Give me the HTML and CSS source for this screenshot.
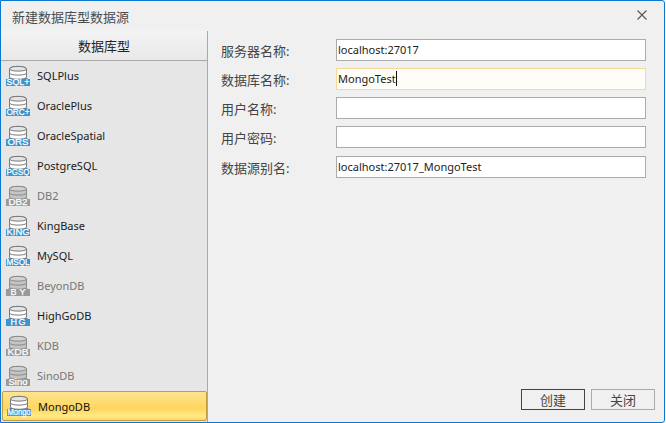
FILE: index.html
```html
<!DOCTYPE html>
<html>
  <head>
    <meta charset="utf-8">
    <title>新建数据库型数据源</title>
    <link rel="stylesheet" href="styles.css">
  </head>
  <body>
    <svg class="icon_defs" width="0" height="0">
      <symbol id="db_can" viewBox="0 0 24 15">
        <path class="can_body" d="M3.500 4C3.500 .5 20.500 .5 20.500 4V12C20.500 15 3.500 15 3.500 12Z"/>
        <path class="can_top" d="M3.500 4C3.500 6.800 20.500 6.800 20.500 4C20.500 .5 3.500 .5 3.500 4Z"/>
        <path class="can_line" d="M3.500 8C3.500 10.800 20.500 10.800 20.500 8"/>
      </symbol>
      <symbol id="db_badge" viewBox="0 0 24 8">
        <path d="M0 3L3 0H21L24 3V8H0Z"/>
      </symbol>
    </svg>

    <div class="dialog">
      <div class="titlebar">
        <span class="title">新建数据库型数据源</span>
        <svg class="close_icon" width="10" height="10" viewBox="0 0 10 10">
          <path d="M.5 .5L9.500 9.500M9.500 .5L.5 9.500" stroke="#555" stroke-width="1.100"/>
        </svg>
      </div>

      <div class="content">
        <div class="sidebar">
          <div class="sidebar_header">数据库型</div>
          <ul class="db_list">
            <li class="db_item">
              <svg class="db_icon" width="24" height="24" viewBox="0 0 24 24"><use href="#db_badge" y="14" width="24" height="8"/><use href="#db_can" y="1" width="24" height="15"/><rect class="badge_fill" y="15" width="24" height="7"/><text class="badge_text" x="12" y="21" textLength="23" lengthAdjust="spacingAndGlyphs">SQL+</text></svg>
              <span>SQLPlus</span>
            </li>
            <li class="db_item">
              <svg class="db_icon" width="24" height="24" viewBox="0 0 24 24"><use href="#db_badge" y="14" width="24" height="8"/><use href="#db_can" y="1" width="24" height="15"/><rect class="badge_fill" y="15" width="24" height="7"/><text class="badge_text" x="12" y="21" textLength="23" lengthAdjust="spacingAndGlyphs">ORC+</text></svg>
              <span>OraclePlus</span>
            </li>
            <li class="db_item">
              <svg class="db_icon" width="24" height="24" viewBox="0 0 24 24"><use href="#db_badge" y="14" width="24" height="8"/><use href="#db_can" y="1" width="24" height="15"/><rect class="badge_fill" y="15" width="24" height="7"/><text class="badge_text" x="12" y="21" textLength="21" lengthAdjust="spacingAndGlyphs">ORS</text></svg>
              <span>OracleSpatial</span>
            </li>
            <li class="db_item">
              <svg class="db_icon" width="24" height="24" viewBox="0 0 24 24"><use href="#db_badge" y="14" width="24" height="8"/><use href="#db_can" y="1" width="24" height="15"/><rect class="badge_fill" y="15" width="24" height="7"/><text class="badge_text" x="12" y="21" textLength="23" lengthAdjust="spacingAndGlyphs">PGSQ</text></svg>
              <span>PostgreSQL</span>
            </li>
            <li class="db_item db_item_off">
              <svg class="db_icon" width="24" height="24" viewBox="0 0 24 24"><use href="#db_badge" y="14" width="24" height="8"/><use href="#db_can" y="1" width="24" height="15"/><rect class="badge_fill" y="15" width="24" height="7"/><text class="badge_text" x="12" y="21" textLength="19" lengthAdjust="spacingAndGlyphs">DB2</text></svg>
              <span>DB2</span>
            </li>
            <li class="db_item">
              <svg class="db_icon" width="24" height="24" viewBox="0 0 24 24"><use href="#db_badge" y="14" width="24" height="8"/><use href="#db_can" y="1" width="24" height="15"/><rect class="badge_fill" y="15" width="24" height="7"/><text class="badge_text" x="12" y="21" textLength="23" lengthAdjust="spacingAndGlyphs">KING</text></svg>
              <span>KingBase</span>
            </li>
            <li class="db_item">
              <svg class="db_icon" width="24" height="24" viewBox="0 0 24 24"><use href="#db_badge" y="14" width="24" height="8"/><use href="#db_can" y="1" width="24" height="15"/><rect class="badge_fill" y="15" width="24" height="7"/><text class="badge_text" x="12" y="21" textLength="23" lengthAdjust="spacingAndGlyphs">MSQL</text></svg>
              <span>MySQL</span>
            </li>
            <li class="db_item db_item_off">
              <svg class="db_icon" width="24" height="24" viewBox="0 0 24 24"><use href="#db_badge" y="14" width="24" height="8"/><use href="#db_can" y="1" width="24" height="15"/><rect class="badge_fill" y="15" width="24" height="7"/><text class="badge_text" x="12" y="21" textLength="15" lengthAdjust="spacing">BY</text></svg>
              <span>BeyonDB</span>
            </li>
            <li class="db_item">
              <svg class="db_icon" width="24" height="24" viewBox="0 0 24 24"><use href="#db_badge" y="14" width="24" height="8"/><use href="#db_can" y="1" width="24" height="15"/><rect class="badge_fill" y="15" width="24" height="7"/><text class="badge_text" x="12" y="21" textLength="15" lengthAdjust="spacing">HG</text></svg>
              <span>HighGoDB</span>
            </li>
            <li class="db_item db_item_off">
              <svg class="db_icon" width="24" height="24" viewBox="0 0 24 24"><use href="#db_badge" y="14" width="24" height="8"/><use href="#db_can" y="1" width="24" height="15"/><rect class="badge_fill" y="15" width="24" height="7"/><text class="badge_text" x="12" y="21" textLength="21" lengthAdjust="spacingAndGlyphs">KDB</text></svg>
              <span>KDB</span>
            </li>
            <li class="db_item db_item_off">
              <svg class="db_icon" width="24" height="24" viewBox="0 0 24 24"><use href="#db_badge" y="14" width="24" height="8"/><use href="#db_can" y="1" width="24" height="15"/><rect class="badge_fill" y="15" width="24" height="7"/><text class="badge_text" x="12" y="21" textLength="19" lengthAdjust="spacingAndGlyphs">Sino</text></svg>
              <span>SinoDB</span>
            </li>
            <li class="db_item db_item_selected">
              <svg class="db_icon" width="24" height="24" viewBox="0 0 24 24"><use href="#db_badge" y="14" width="24" height="8"/><use href="#db_can" y="1" width="24" height="15"/><rect class="badge_fill" y="15" width="24" height="7"/><text class="badge_text" x="12" y="21" textLength="23" lengthAdjust="spacingAndGlyphs">Mongo</text></svg>
              <span>MongoDB</span>
            </li>
          </ul>
        </div>

        <div class="main">
          <form class="form_grid" onsubmit="return false">
            <label class="form_label" for="server_field">服务器名称:</label>
            <input id="server_field" class="form_input" type="text" value="localhost:27017">

            <label class="form_label" for="database_field">数据库名称:</label>
            <div class="form_input form_input_focus" id="database_field"><span>MongoTest</span><span class="caret"></span></div>

            <label class="form_label" for="user_field">用户名称:</label>
            <input id="user_field" class="form_input" type="text">

            <label class="form_label" for="password_field">用户密码:</label>
            <input id="password_field" class="form_input" type="text">

            <label class="form_label form_row_last" for="alias_field">数据源别名:</label>
            <input id="alias_field" class="form_input form_row_last" type="text" value="localhost:27017_MongoTest">
          </form>

          <div class="button_row">
            <button class="button button_default">创建</button>
            <button class="button">关闭</button>
          </div>
        </div>
      </div>
    </div>
  </body>
</html>
```

FILE: styles.css
```css
html, body
  {
  margin: 0;
  height: 100%;
  background: #fff;
  }

body
  {
  font-family: "Noto Sans", "Noto Sans CJK SC", sans-serif;
  font-size: 11px;
  color: #222;
  }

.icon_defs
  {
  display: block;
  }

.dialog
  {
  box-sizing: border-box;
  width: 665px;
  height: 423px;
  display: flex;
  flex-direction: column;
  background: #f0f0f0;
  border: 1px solid #0a78d0;
  border-radius: 0 3px 3px 0;
  }

.titlebar
  {
  height: 30px;
  flex: none;
  display: flex;
  align-items: center;
  justify-content: space-between;
  box-sizing: border-box;
  padding: 1px 17px 0 11px;
  }

.title
  {
  font-size: 13px;
  color: #4c4c4c;
  }

.close_icon
  {
  display: block;
  margin-bottom: 3px;
  }

.content
  {
  flex: 1;
  display: flex;
  min-height: 0;
  }

.sidebar
  {
  width: 206px;
  flex: none;
  display: flex;
  flex-direction: column;
  background: #e6e6e6;
  border-right: 1px solid #a9a9a9;
  }

.sidebar_header
  {
  box-sizing: border-box;
  height: 30px;
  flex: none;
  display: flex;
  align-items: center;
  justify-content: center;
  padding-bottom: 1px;
  font-size: 13px;
  color: #222;
  background: linear-gradient(#f3f3f3, #e9e9e9);
  border-bottom: 1px solid #a9a9a9;
  }

.db_list
  {
  list-style: none;
  margin: 0;
  padding: 0;
  flex: 1;
  display: flex;
  flex-direction: column;
  }

.db_item
  {
  height: 30px;
  flex: none;
  display: flex;
  align-items: center;
  gap: 7px;
  padding-left: 5px;
  color: #1a1a1a;
  --can_body: #fff;
  --can_top: #e4e4e4;
  --can_line: #7a7a7a;
  --badge: #3a94cf;
  }

.db_item span
  {
  padding-bottom: 2px;
  }

.db_item_off
  {
  color: #777;
  --can_body: #c4c4c4;
  --can_top: #d2d2d2;
  --can_line: #8a8a8a;
  --badge: #9a9a9a;
  }

.db_item_selected
  {
  box-sizing: border-box;
  height: 30px;
  margin-left: 1px;
  padding-left: 4px;
  background: linear-gradient(#fde48f, #fed65f 60%, #feeb85 85%, #fdd768);
  border: 1px solid #c69a45;
  border-radius: 2px;
  color: #111;
  }

.db_item_selected span
  {
  padding-bottom: 0;
  }

.db_icon
  {
  flex: none;
  overflow: visible;
  fill: var(--badge);
  }

.can_body
  {
  fill: var(--can_body);
  stroke: var(--can_line);
  }

.can_top
  {
  fill: var(--can_top);
  stroke: var(--can_line);
  }

.can_line
  {
  fill: none;
  stroke: var(--can_line);
  }

.badge_fill
  {
  fill: var(--badge);
  }

.badge_text
  {
  font-family: "Liberation Sans", sans-serif;
  font-size: 9px;
  fill: #fff;
  stroke: #fff;
  stroke-width: .25px;
  text-anchor: middle;
  }

.main
  {
  flex: 1;
  display: flex;
  flex-direction: column;
  justify-content: space-between;
  padding: 8px 9px 12px 13px;
  min-width: 0;
  }

.form_grid
  {
  display: grid;
  grid-template-columns: 115px 310px;
  row-gap: 7px;
  align-items: center;
  }

.form_row_last
  {
  margin-top: 1px;
  }

.form_label
  {
  font-size: 13px;
  color: #444;
  }

.form_input
  {
  box-sizing: border-box;
  height: 22px;
  width: 310px;
  padding: 0 1px 1px;
  font-family: inherit;
  font-size: 11px;
  color: #222;
  background: #fff;
  border: 1px solid #ababab;
  outline: none;
  }

.form_input.form_row_last
  {
  margin-top: 1px;
  }

.form_input_focus
  {
  display: flex;
  align-items: center;
  border-color: #f6d998;
  background: #fffdf8;
  }

.caret
  {
  width: 1px;
  height: 15px;
  background: #111;
  }

.button_row
  {
  display: flex;
  justify-content: flex-end;
  gap: 6px;
  }

.button
  {
  box-sizing: border-box;
  width: 64px;
  height: 21px;
  padding: 0 0 2px;
  font-family: inherit;
  font-size: 13px;
  color: #444;
  background: #f0f0f0;
  border: 1px solid #ababab;
  }

.button_default
  {
  border-color: #444;
  }
```
